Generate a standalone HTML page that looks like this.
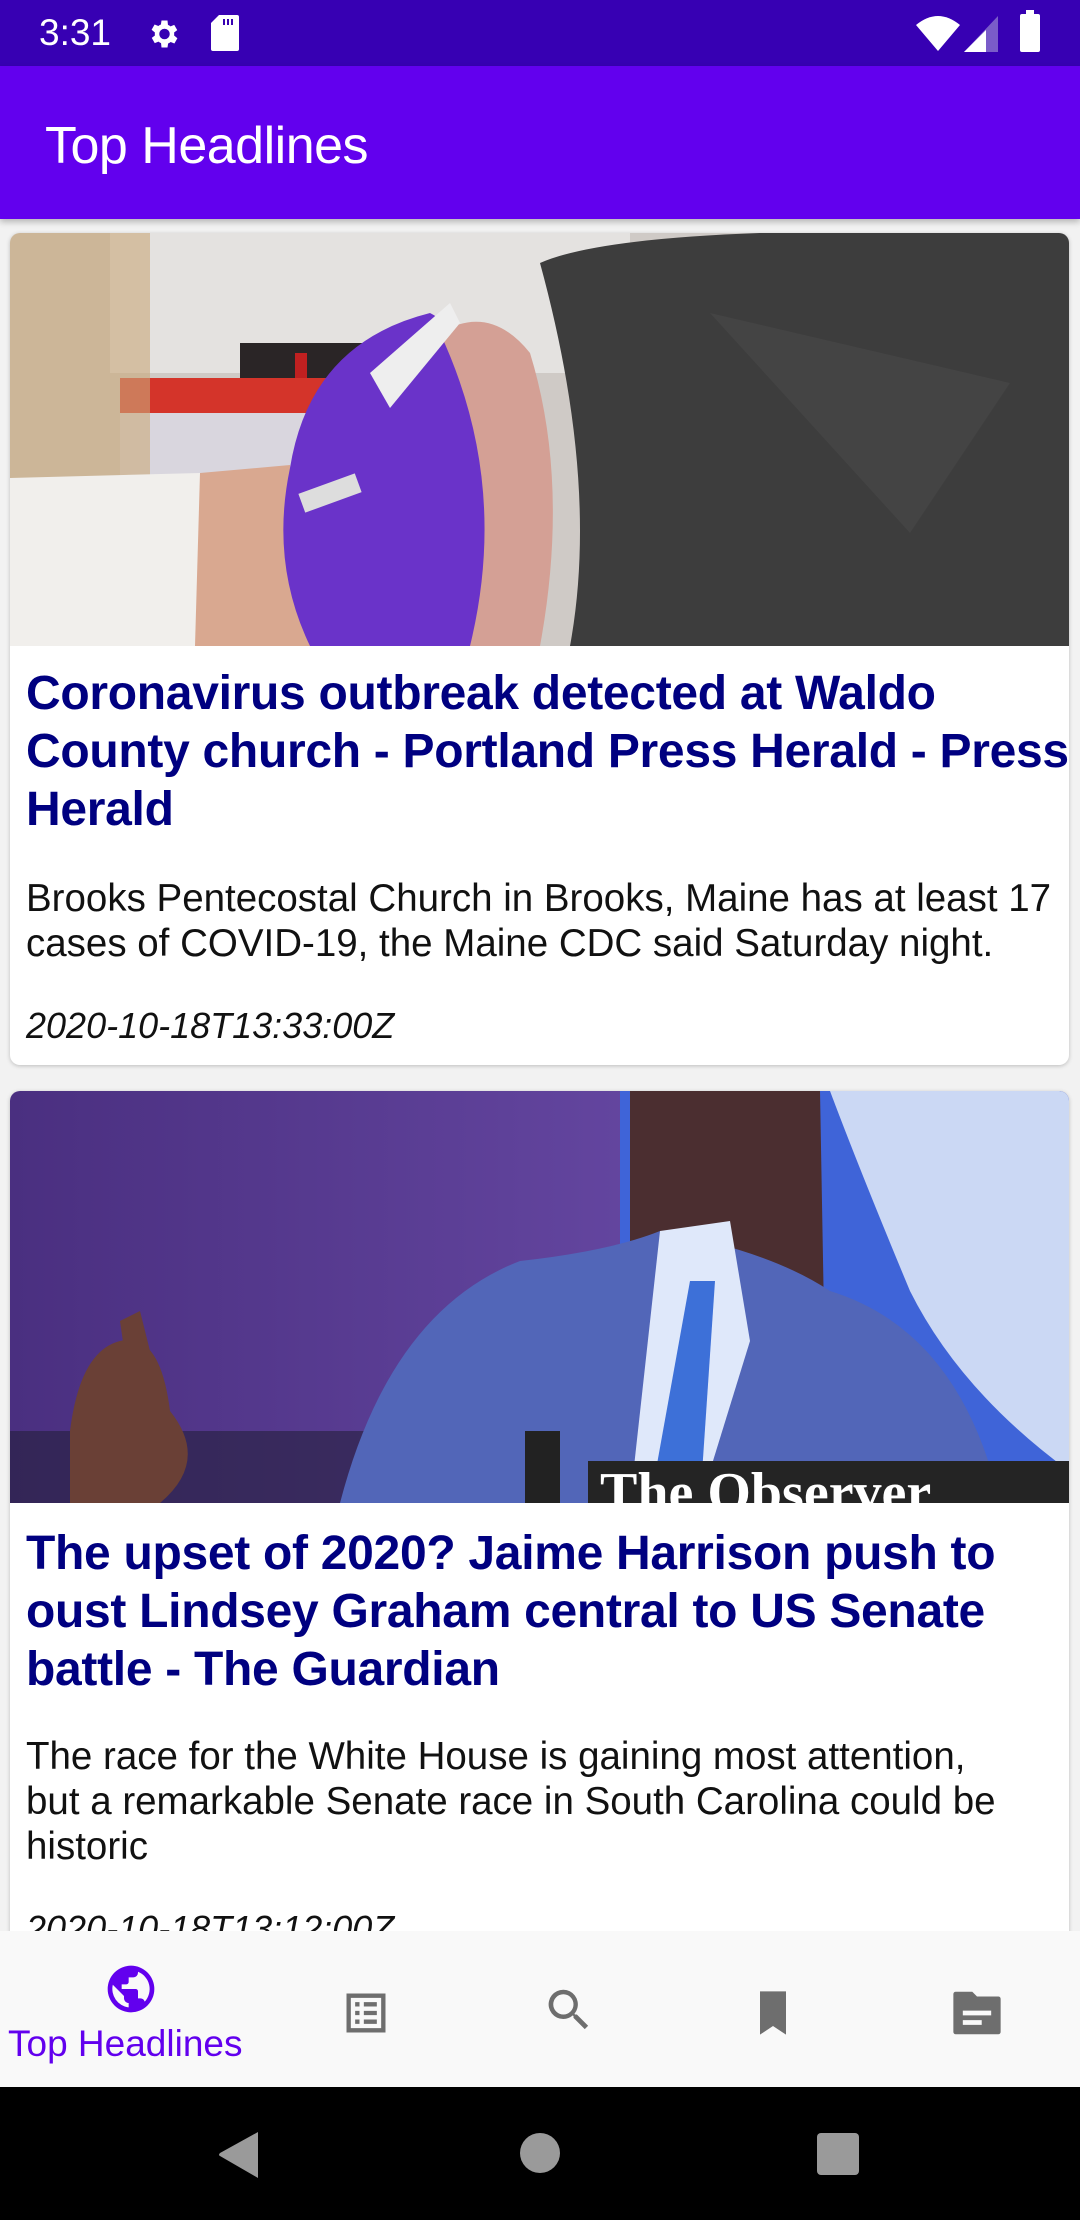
<!DOCTYPE html>
<html><head><meta charset="utf-8"><style>
*{margin:0;padding:0;box-sizing:border-box}
body{width:1080px;height:2220px;overflow:hidden;background:#f2f2f2;font-family:"Liberation Sans",Roboto,sans-serif;position:relative}
.sb{position:absolute;left:0;top:0;width:1080px;height:66px;background:#3700b3;color:#fff}
.ab{position:absolute;left:0;top:66px;width:1080px;height:153px;background:#6200ee;box-shadow:0 3px 6px rgba(0,0,0,.25)}
.ab h1{position:absolute;left:45px;top:50px;font-size:52px;font-weight:normal;color:#fff;letter-spacing:-0.5px}
.card{position:absolute;left:10px;width:1059px;background:#fff;border-radius:10px;overflow:hidden;box-shadow:0 1px 4px rgba(0,0,0,.22)}
.t{position:absolute;left:16px;color:#000080;font-weight:bold;font-size:48px;line-height:58px;white-space:nowrap;letter-spacing:-0.3px}
.d{position:absolute;left:16px;color:#111;font-size:38.5px;line-height:45px;white-space:nowrap}
.dt{position:absolute;left:16px;color:#111;font-size:36px;font-style:italic;white-space:nowrap}
.bn{position:absolute;left:0;top:1931px;width:1080px;height:156px;background:#f9f9f9}
.nb{position:absolute;left:0;top:2087px;width:1080px;height:133px;background:#000}
</style></head><body>
<div class="sb">
<div style="position:absolute;left:39px;top:12px;font-size:37px">3:31</div>
<svg style="position:absolute;left:145px;top:16px" width="36" height="36" viewBox="0 0 24 24"><path fill="#fff" d="M19.4 13a7.5 7.5 0 0 0 0-2l2.1-1.6-2-3.5-2.5 1a7 7 0 0 0-1.7-1L15 3h-4l-.4 2.7a7 7 0 0 0-1.7 1l-2.5-1-2 3.5L6.6 11a7.5 7.5 0 0 0 0 2l-2.1 1.6 2 3.5 2.5-1a7 7 0 0 0 1.7 1L11 21h4l.4-2.7a7 7 0 0 0 1.7-1l2.5 1 2-3.5zM13 15.5a3.5 3.5 0 1 1 0-7 3.5 3.5 0 0 1 0 7z"/></svg>
<svg style="position:absolute;left:210px;top:15px" width="30" height="36" viewBox="0 0 14 18"><path fill="#fff" d="M4 0h9a1 1 0 0 1 1 1v16a1 1 0 0 1-1 1H1a1 1 0 0 1-1-1V4z"/><path fill="#3700b3" d="M6 2h1v3H6zM8 2h1v3H8zM10 2h1v3h-1z"/></svg>
<svg style="position:absolute;left:916px;top:15px" width="44" height="36" viewBox="0 0 44 36"><path fill="#fff" d="M0 10Q22-8 44 10L22 36z"/></svg>
<svg style="position:absolute;left:964px;top:16px" width="34" height="36" viewBox="0 0 34 36"><path fill="#7a5cc9" d="M34 0V36H0z"/><path fill="#fff" d="M22 14V36H0z"/></svg>
<div style="position:absolute;left:1020px;top:14px;width:20px;height:38px;background:#fff;border-radius:2px"></div>
<div style="position:absolute;left:1026px;top:10px;width:8px;height:6px;background:#fff"></div>
</div>
<div class="ab"><h1>Top Headlines</h1></div>

<div class="card" style="top:233px;height:832px">
<svg width="1059" height="413" viewBox="0 0 1059 413" preserveAspectRatio="none" style="display:block">
<rect width="1059" height="413" fill="#cfcac6"/>
<rect x="100" y="0" width="520" height="140" fill="#e4e2e0"/>
<rect x="230" y="110" width="150" height="65" fill="#2a2526"/>
<rect x="285" y="120" width="12" height="30" fill="#c02020"/>
<rect x="110" y="145" width="300" height="35" fill="#d4342a"/>
<rect x="110" y="180" width="300" height="100" fill="#d9d6de"/>
<rect x="0" y="0" width="140" height="413" fill="#c9a87a" opacity=".6"/>
<path d="M0 245L190 240 200 413H0z" fill="#f1efec"/>
<path d="M190 240L280 232 300 413H185z" fill="#d9a890"/>
<path d="M280 235Q300 110 420 80 460 100 470 180 490 300 470 413H300Q260 330 280 235z" fill="#6a33c9"/>
<path d="M430 100Q480 70 520 120 560 250 530 413H460Q500 250 430 100z" fill="#d4a095"/>
<path d="M530 30Q620 -10 1020 0H1059V413H560Q590 250 530 30z" fill="#3d3d3d"/>
<path d="M700 80L900 300 1000 150z" fill="#4a4a4a" opacity=".6"/>
<path d="M360 140L440 70 450 90 380 175z" fill="#eee"/>
<rect x="290" y="250" width="60" height="20" fill="#ddd" transform="rotate(-20 320 260)"/>
</svg>
<div class="t" style="top:432px">Coronavirus outbreak detected at Waldo<br>County church - Portland Press Herald - Press<br>Herald</div>
<div class="d" style="top:643px">Brooks Pentecostal Church in Brooks, Maine has at least 17<br>cases of COVID-19, the Maine CDC said Saturday night.</div>
<div class="dt" style="top:772px">2020-10-18T13:33:00Z</div>
</div>

<div class="card" style="top:1091px;height:900px">
<svg width="1059" height="412" viewBox="0 0 1059 412" preserveAspectRatio="none" style="display:block">
<defs><linearGradient id="g" x1="0" y1="0" x2="1" y2="0"><stop offset="0" stop-color="#4a2f80"/><stop offset=".6" stop-color="#6446a0"/></linearGradient></defs>
<rect width="1059" height="412" fill="url(#g)"/>
<rect x="610" y="0" width="449" height="412" fill="#3f64d8"/>
<path d="M820 0H1059V380Q950 300 900 200 850 80 820 0z" fill="#cbd8f4"/>
<rect x="0" y="340" width="610" height="72" fill="#24203c" opacity=".6"/>
<path d="M620 0H810L815 280 620 280z" fill="#4b2e30"/>
<path d="M330 412Q380 220 510 170 600 160 650 140 760 160 820 200 950 240 990 412z" fill="#5266b8"/>
<path d="M650 140L720 130 740 250 690 412 620 412z" fill="#dfe8fa"/>
<path d="M680 190L705 190 690 412 640 412z" fill="#3d70d8"/>
<path d="M60 340Q70 260 110 250 150 240 160 320 200 370 150 412H60z" fill="#6a4036"/>
<path d="M110 230L130 220 150 300 120 300z" fill="#6a4036"/>
<rect x="515" y="340" width="35" height="72" fill="#222"/>
<rect x="578" y="370" width="481" height="42" fill="#242424"/>
<text x="590" y="420" font-family="Liberation Serif" font-size="56" fill="#fff" font-weight="bold">The Observer</text>
</svg>
<div class="t" style="top:434px">The upset of 2020? Jaime Harrison push to<br>oust Lindsey Graham central to US Senate<br>battle - The Guardian</div>
<div class="d" style="top:643px">The race for the White House is gaining most attention,<br>but a remarkable Senate race in South Carolina could be<br>historic</div>
<div class="dt" style="top:817px">2020-10-18T13:12:00Z</div>
</div>

<div class="bn">
<svg style="position:absolute;left:103px;top:30px" width="56" height="56" viewBox="0 0 24 24"><path fill="#6200ee" d="M12 2a10 10 0 1 0 0 20 10 10 0 0 0 0-20zm-1 17.9A8 8 0 0 1 4.2 10.2L9 15v1a2 2 0 0 0 2 2zm6.9-2.5A2 2 0 0 0 16 16h-1v-3a1 1 0 0 0-1-1H8v-2h2a1 1 0 0 0 1-1V7h2a2 2 0 0 0 2-2v-.4a8 8 0 0 1 2.9 12.8z"/></svg>
<div style="position:absolute;left:8px;top:92px;font-size:37px;color:#6200ee">Top Headlines</div>
<svg style="position:absolute;left:340px;top:56px" width="52" height="52" viewBox="0 0 24 24"><path fill="#6e6e6e" d="M3 3h18v18H3zm2 2v14h14V5zm2 2h2v2H7zm4 0h6v2h-6zm-4 4h2v2H7zm4 0h6v2h-6zm-4 4h2v2H7zm4 0h6v2h-6z"/></svg>
<svg style="position:absolute;left:542px;top:52px" width="54" height="54" viewBox="0 0 24 24"><path fill="#6e6e6e" d="M15.5 14h-.8l-.3-.3A6.5 6.5 0 1 0 9.5 16a6.5 6.5 0 0 0 4.2-1.6l.3.3v.8l5 5 1.5-1.5zm-6 0a4.5 4.5 0 1 1 0-9 4.5 4.5 0 0 1 0 9z"/></svg>
<svg style="position:absolute;left:747px;top:56px" width="52" height="52" viewBox="0 0 24 24"><path fill="#6e6e6e" d="M6 2h12v20l-6-4-6 4z"/></svg>
<svg style="position:absolute;left:948px;top:56px" width="58" height="52" viewBox="0 0 24 22"><path fill="#6e6e6e" d="M3 2h7l2 2h9a1 1 0 0 1 1 1v14a1 1 0 0 1-1 1H3a1 1 0 0 1-1-1V3a1 1 0 0 1 1-1zm3 8v2h12v-2zm0 4v2h8v-2z"/></svg>
</div>
<div class="nb">
<svg style="position:absolute;left:218px;top:45px" width="42" height="46" viewBox="0 0 42 46"><path fill="#9a9a9a" d="M40 0V46L2 24Q0 23 2 21z"/></svg>
<div style="position:absolute;left:520px;top:46px;width:40px;height:40px;border-radius:50%;background:#9a9a9a"></div>
<div style="position:absolute;left:817px;top:46px;width:42px;height:42px;border-radius:4px;background:#9a9a9a"></div>
</div>
</body></html>
